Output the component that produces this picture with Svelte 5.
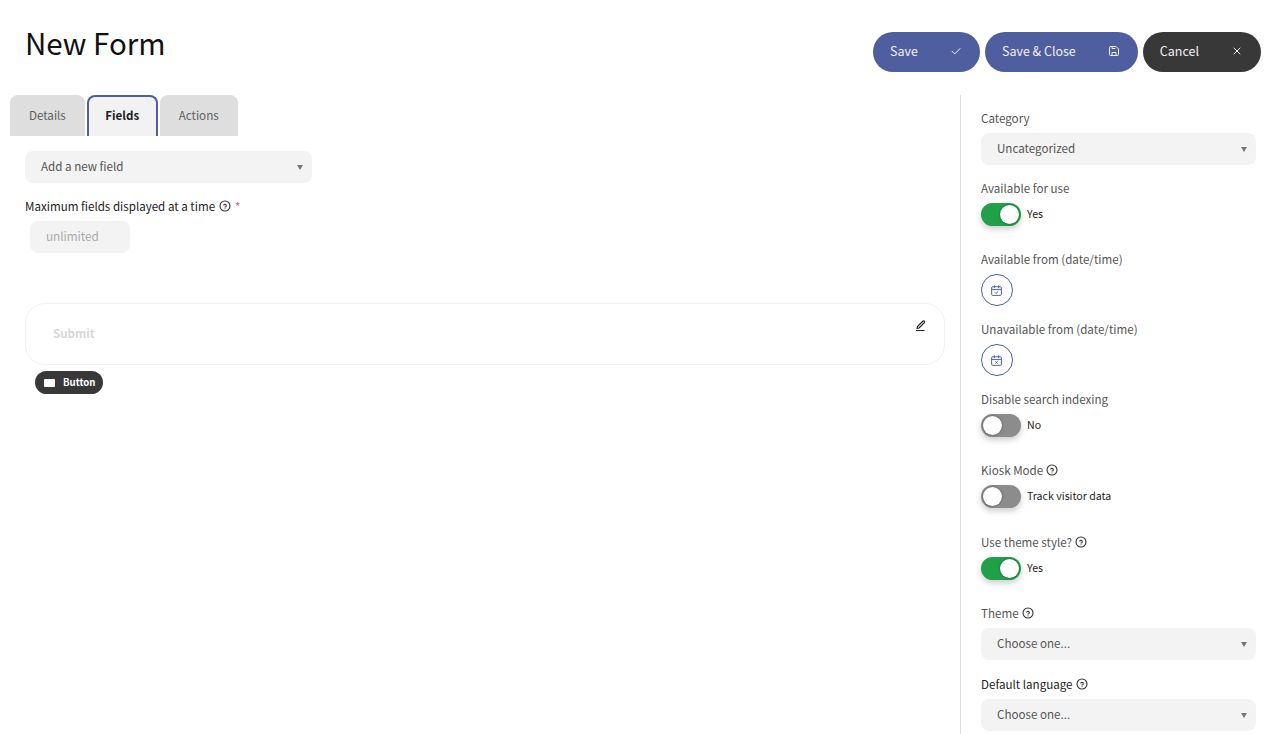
<script>
    const sideFields = [
        { type: "pick", label: "Category", value: "Uncategorized" },
        { type: "toggle", label: "Available for use", on: true, text: "Yes" },
        { type: "when", label: "Available from (date/time)", mark: "check" },
        { type: "when", label: "Unavailable from (date/time)", mark: "x" },
        { type: "toggle", label: "Disable search indexing", on: false, text: "No" },
        { type: "toggle", label: "Kiosk Mode", help: true, on: false, text: "Track visitor data", roomy: true },
        { type: "toggle", label: "Use theme style?", help: true, on: true, text: "Yes" },
        { type: "pick", label: "Theme", help: true, value: "Choose one...", roomy: true },
        { type: "pick", label: "Default language", help: true, value: "Choose one...", strong: true }
    ]
</script>

{#snippet help()}
    <svg class="help" viewBox="0 0 24 24" fill="none" stroke="currentColor" stroke-width="2.2" stroke-linecap="round" stroke-linejoin="round">
        <circle cx="12" cy="12" r="10"/>
        <path d="M12 17.5v.01M12 14a2.6 2.6 0 0 0 1.2-4.9 2.7 2.7 0 0 0-3.6 1"/>
    </svg>
{/snippet}

{#snippet select(value)}
    <div class="select">
        <span>{value}</span>
        <i class="caret"></i>
    </div>
{/snippet}

<div class="page">
    <header>
        <h1>New Form</h1>
        <div class="actions">
            <button class="btn">
                Save
                <svg viewBox="0 0 24 24"><path d="M4 12.5l5.5 5.5L20 7"/></svg>
            </button>
            <button class="btn">
                Save &amp; Close
                <svg viewBox="0 0 24 24"><path d="M5 3h11l5 5v11a2 2 0 0 1-2 2H5a2 2 0 0 1-2-2V5a2 2 0 0 1 2-2zM8 21v-6h8v6M8 3v4h6"/></svg>
            </button>
            <button class="btn dark">
                Cancel
                <svg viewBox="0 0 24 24"><path d="M6 6l12 12M18 6L6 18"/></svg>
            </button>
        </div>
    </header>

    <div class="body">
        <main>
            <nav class="tabs">
                <span class="tab">Details</span>
                <span class="tab active">Fields</span>
                <span class="tab">Actions</span>
            </nav>
            <div class="add">
                {@render select("Add a new field")}
            </div>
            <div class="max">
                Maximum fields displayed at a time
                {@render help()}
                <b>*</b>
            </div>
            <div class="limit">unlimited</div>

            <section class="card">
                <span>Submit</span>
                <svg viewBox="0 0 24 24"><path d="M4 21h17M6 17l1-4L17.5 2.5a2 2 0 0 1 3 3L10 16z"/></svg>
            </section>
            <div class="pill">
                <i></i>
                Button
            </div>
        </main>

        <aside>
            {#each sideFields as f}
                <div class="field {f.type}" class:roomy={f.roomy}>
                    <div class="label" class:strong={f.strong}>
                        {f.label}
                        {#if f.help}{@render help()}{/if}
                    </div>
                    {#if f.type == "pick"}
                        {@render select(f.value)}
                    {:else if f.type == "toggle"}
                        <div class="switch">
                            <div class="track" class:on={f.on}><i></i></div>
                            <span>{f.text}</span>
                        </div>
                    {:else}
                        <div class="date">
                            <svg viewBox="0 0 24 24">
                                <rect x="3" y="5" width="18" height="16" rx="2"/>
                                <path d="M3 10h18M8 2.5v5M16 2.5v5"/>
                                {#if f.mark == "check"}
                                    <path d="M9 15.5l2 2 4-4"/>
                                {:else}
                                    <path d="M10 13.5l4 4M14 13.5l-4 4"/>
                                {/if}
                            </svg>
                        </div>
                    {/if}
                </div>
            {/each}
        </aside>
    </div>
</div>

<style>
    :global(body) {
        font-family: "Noto Sans CJK SC", "Open Sans", sans-serif;
        color: #222;
    }
    .page {
        height: 734px;
        overflow: hidden;
    }

    header {
        display: flex;
        justify-content: space-between;
        height: 95px;
        padding: 0 19px 0 25px;
        box-sizing: border-box;
    }
    h1 {
        margin: 22px 0 0;
        font-size: 29.5px;
        line-height: 40px;
        font-weight: 400;
        color: #111;
    }
    .actions {
        display: flex;
        gap: 5px;
        margin-top: 32px;
    }
    .btn {
        display: flex;
        align-items: center;
        gap: 32px;
        height: 40px;
        padding: 0 18px 2px 17px;
        border: none;
        border-radius: 20px;
        background: #4e5e9e;
        color: #f2f2f2;
        font: inherit;
        font-size: 12.5px;
        line-height: 20px;
    }
    .btn.dark {
        background: #383838;
    }
    .btn svg {
        width: 12px;
        height: 12px;
        fill: none;
        stroke: currentColor;
        stroke-width: 2;
        stroke-linecap: round;
        stroke-linejoin: round;
    }

    .body {
        display: flex;
        height: 639px;
    }
    main {
        width: 960px;
        flex: none;
        box-sizing: border-box;
        padding-left: 10px;
    }

    .tabs {
        display: flex;
        gap: 2px;
    }
    .tab {
        display: flex;
        align-items: center;
        height: 41px;
        padding: 0 19px 2px;
        box-sizing: border-box;
        background: #dedede;
        border-radius: 8px 8px 0 0;
        color: #5f5f5f;
        font-size: 11.6px;
    }
    .tab.active {
        border: 2px solid #4e5e9e;
        border-bottom: none;
        background: #f2f2f2;
        color: #222;
        font-weight: 700;
        padding: 0 16.5px 4px;
    }

    .add {
        width: 287px;
        margin: 15px 0 0 15px;
    }
    .select {
        display: flex;
        align-items: center;
        justify-content: space-between;
        height: 32px;
        padding: 0 9px 0 16px;
        background: #f3f3f3;
        border-radius: 8px;
        color: #555;
        font-size: 11.6px;
    }
    .select span {
        margin-bottom: 2px;
    }
    .caret {
        width: 0;
        height: 0;
        border-left: 3.5px solid transparent;
        border-right: 3.5px solid transparent;
        border-top: 5px solid #777;
        margin-top: 1px;
    }

    .max {
        display: flex;
        align-items: center;
        gap: 4px;
        margin: 13px 0 0 15px;
        height: 20px;
        font-size: 11.6px;
    }
    .max b {
        color: #f0506e;
        font-weight: 400;
    }
    .help {
        width: 12px;
        height: 12px;
        color: #333;
    }
    .limit {
        display: flex;
        align-items: center;
        width: 100px;
        height: 32px;
        box-sizing: border-box;
        margin: 5px 0 0 20px;
        padding: 0 0 4px 16px;
        background: #f3f3f3;
        border-radius: 8px;
        color: #aaa;
        font-size: 11.7px;
    }

    .card {
        display: flex;
        align-items: center;
        justify-content: space-between;
        width: 920px;
        height: 62px;
        box-sizing: border-box;
        margin: 50px 0 0 15px;
        padding: 0 18px 0 27px;
        border: 1px solid #f0f0f0;
        border-radius: 20px;
        color: #d8d8d8;
        font-size: 11.6px;
        font-weight: 700;
    }
    .card span {
        margin-bottom: 2px;
    }
    .card svg {
        width: 12px;
        height: 12px;
        margin-bottom: 16px;
        fill: none;
        stroke: #222;
        stroke-width: 2.2;
        stroke-linejoin: round;
    }
    .pill {
        display: flex;
        align-items: center;
        gap: 8px;
        width: fit-content;
        height: 23px;
        margin: 6px 0 0 25px;
        padding: 0 8px 2px 9px;
        box-sizing: border-box;
        background: #383838;
        border-radius: 12px;
        color: #fff;
        font-size: 9.6px;
        font-weight: 700;
    }
    .pill i {
        width: 11px;
        height: 8px;
        margin-top: 2px;
        background: #fff;
        border-radius: 1px;
    }

    aside {
        flex: 1;
        border-left: 1px solid #ddd;
        padding: 13px 24px 0 20px;
    }
    .field {
        margin-bottom: 13px;
    }
    .field.toggle {
        margin-bottom: 23px;
    }
    .field.roomy {
        margin-bottom: 14px;
    }
    .field.toggle.roomy {
        margin-bottom: 24px;
    }
    .label {
        display: flex;
        align-items: center;
        gap: 3px;
        height: 20px;
        margin-bottom: 5px;
        color: #555;
        font-size: 11.6px;
    }
    .label.strong {
        color: #222;
    }
    .switch {
        display: flex;
        align-items: center;
        gap: 6px;
        font-size: 10.6px;
        color: #222;
    }
    .switch span {
        margin-bottom: 2px;
    }
    .track {
        display: flex;
        justify-content: flex-start;
        align-items: center;
        width: 40px;
        height: 23px;
        box-sizing: border-box;
        padding: 0 2px;
        background: #8c8c8c;
        border-radius: 12px;
        box-shadow: 0 3px 6px rgba(0, 0, 0, 0.2);
    }
    .track.on {
        justify-content: flex-end;
        background: #20a048;
    }
    .track i {
        width: 19px;
        height: 19px;
        background: #fff;
        border-radius: 50%;
        box-shadow: 0 0 2px rgba(0, 0, 0, 0.6);
    }
    .date {
        display: flex;
        align-items: center;
        justify-content: center;
        width: 32px;
        height: 32px;
        box-sizing: border-box;
        border: 1px solid #4e5e9e;
        border-radius: 50%;
    }
    .date svg {
        width: 13px;
        height: 13px;
        margin-right: 1px;
        fill: none;
        stroke: #4e5e9e;
        stroke-width: 1.8;
    }
</style>
